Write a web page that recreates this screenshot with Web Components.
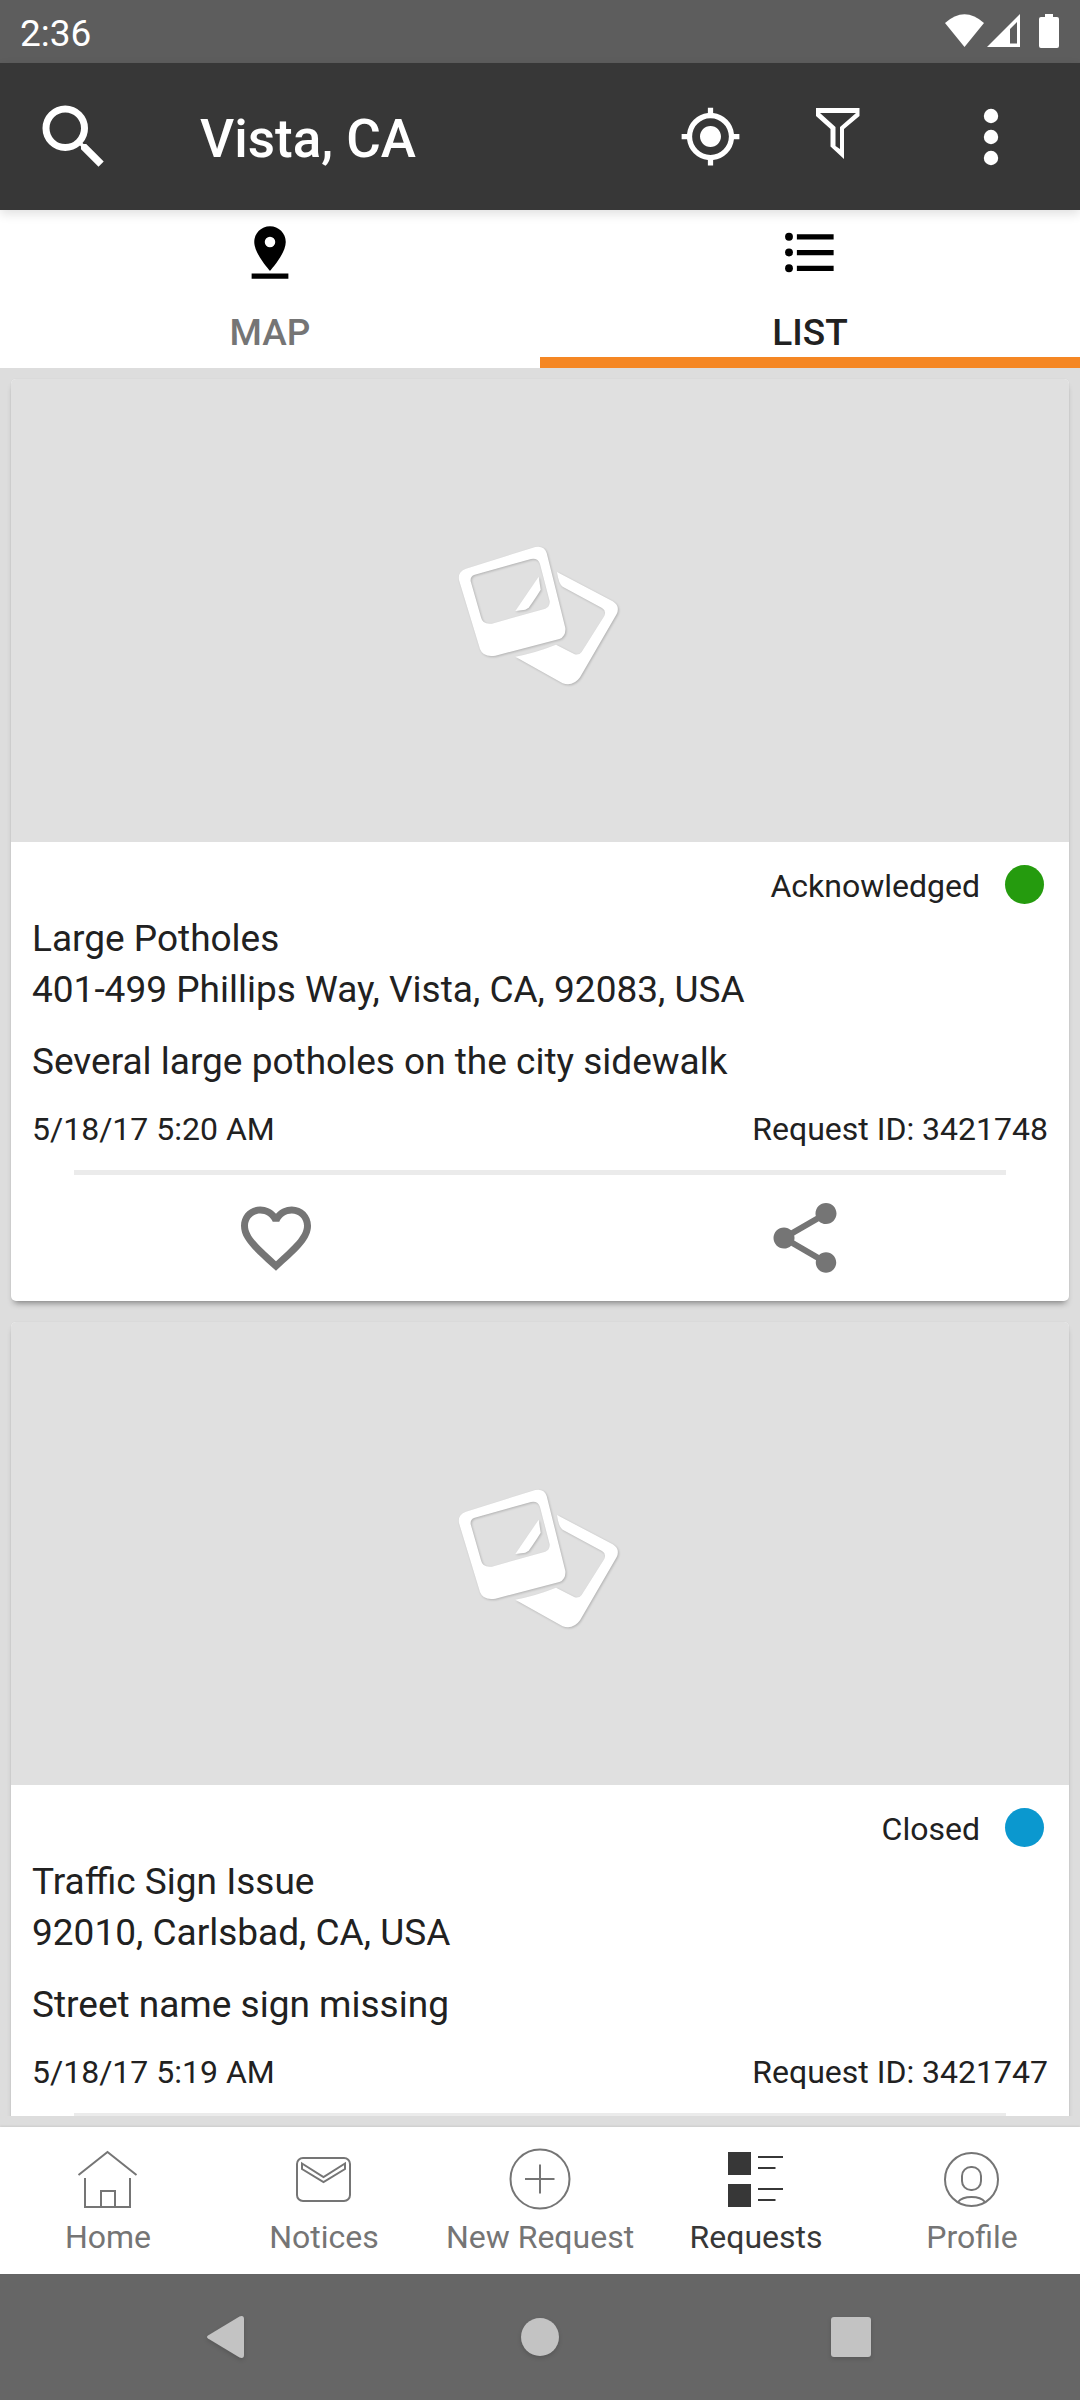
<!DOCTYPE html>
<html lang="en">
<head>
<meta charset="utf-8">
<meta name="viewport" content="width=device-width, initial-scale=1">
<title>Requests</title>
<style>
  body { margin: 0; font-family: Roboto, "Liberation Sans", sans-serif; color: #212121; background: #ddd; }
</style>
</head>
<body>
<requests-app></requests-app>

<script>
const reset = `
  *, *::before, *::after { box-sizing: border-box; }
  :host { display: block; }
  button { margin: 0; padding: 0; border: 0; background: none; font: inherit; color: inherit; cursor: pointer; }
  svg { display: block; flex: none; fill: currentColor; }
`;

function define(name, css, html) {
  const template = document.createElement('template');
  template.innerHTML = `<style>${reset}${css}</style>${html}`;
  customElements.define(name, class extends HTMLElement {
    constructor() {
      super();
      this.attachShadow({ mode: 'open' }).append(template.content.cloneNode(true));
    }
  });
}

define('status-bar', `
  :host { display: flex; align-items: center; justify-content: space-between; height: 63px; padding: 4px 20px 0;
          background: #5d5d5d; color: #fff; font-size: 37px; line-height: 43px; box-sizing: border-box; }
  svg { margin-top: -4px; }
`, `
  <span>2:36</span>
  <svg width="116" height="36" viewBox="944 14 116 36" aria-hidden="true">
    <path d="M945 23Q964.500 5.500 984 23L964.500 47Z"/>
    <path fill-rule="evenodd" d="M987 47L1020 14V47ZM1010 29V43.500H1017V22Z"/>
    <path d="M1045 14H1053V17H1057Q1059 17 1059 19V46Q1059 48 1057 48H1041Q1039 48 1039 46V19Q1039 17 1041 17H1045Z"/>
  </svg>
`);

define('app-bar', `
  :host { display: flex; align-items: center; height: 147px; padding: 0 26px 0 10px; background: #373737; color: #fff;
          box-shadow: 0 4px 10px rgba(0,0,0,.12); z-index: 1; }
  button { display: flex; justify-content: center; align-items: center; width: 127px; height: 100%; }
  h1 { flex: 1; margin: 0 0 0 63px; padding-top: 5px; font-size: 53px; line-height: 62px; font-weight: 500; white-space: nowrap; }
  .more { margin-left: 26px; }
`, `
  <button aria-label="Search"><svg width="84" height="84" viewBox="0 0 24 24"><path d="M15.500 14h-.79l-.28-.27A6.470 6.470 0 0 0 16 9.500 6.500 6.500 0 1 0 9.500 16c1.610 0 3.090-.59 4.230-1.570l.27.28v.79l5 4.990L20.490 19l-4.990-5zm-6 0a4.500 4.500 0 1 1 0-9 4.500 4.500 0 0 1 0 9z"/></svg></button>
  <h1><slot></slot></h1>
  <button aria-label="My location"><svg width="63" height="63" viewBox="0 0 24 24"><path d="M12 8c-2.210 0-4 1.790-4 4s1.790 4 4 4 4-1.790 4-4-1.790-4-4-4zm8.940 3A8.994 8.994 0 0 0 13 3.060V1h-2v2.060A8.994 8.994 0 0 0 3.060 11H1v2h2.060A8.994 8.994 0 0 0 11 20.940V23h2v-2.060A8.994 8.994 0 0 0 20.940 13H23v-2h-2.060zM12 19c-3.870 0-7-3.130-7-7s3.130-7 7-7 7 3.130 7 7-3.130 7-7 7z"/></svg></button>
  <button aria-label="Filter"><svg width="63" height="63" viewBox="0 0 63 63"><path fill-rule="evenodd" d="M10 3H53.500V11L38 24V54L24.500 41.500V24L10 11ZM14 8L29.500 22V41L34 44V22L50 8Z"/></svg></button>
  <button class="more" aria-label="More options"><svg width="84" height="84" viewBox="0 0 24 24"><circle cx="12" cy="6" r="2.050"/><circle cx="12" cy="12" r="2.050"/><circle cx="12" cy="18" r="2.050"/></svg></button>
`);

define('view-tabs', `
  :host { display: grid; grid-template-columns: 1fr 1fr; background: #fff; }
  button { display: flex; flex-direction: column; align-items: center; gap: 27px; height: 158px; padding-top: 11px;
           font-size: 37px; line-height: 44px; font-weight: 500; color: #757575; }
  svg { fill: #000; }
  [aria-selected=true] { color: #212121; box-shadow: inset 0 -11px #f58723; }
`, `
  <button role="tab" aria-selected="false"><svg width="64" height="63" viewBox="0 0 24 24"><path d="M18 8c0-3.310-2.690-6-6-6S6 4.690 6 8c0 4.500 6 11 6 11s6-6.500 6-11zm-8 0a2 2 0 1 1 4 0 2 2 0 0 1-4 0zM5 20v2h14v-2H5z"/></svg>MAP</button>
  <button role="tab" aria-selected="true"><svg width="64" height="63" viewBox="0 0 24 24"><circle cx="4" cy="6" r="1.500"/><circle cx="4" cy="12" r="1.500"/><circle cx="4" cy="18" r="1.500"/><path d="M7 5h14v2H7zM7 11h14v2H7zM7 17h14v2H7z"/></svg>LIST</button>
`);

define('photo-placeholder', `
  :host { display: flex; align-items: center; justify-content: center; height: 463px; background: #e0e0e0; color: #fff; }
  svg { filter: drop-shadow(1px 1px 1px rgba(0,0,0,.2)); }
`, `
  <svg width="240" height="190" viewBox="2 -14 720 570" role="img" aria-label="No photo">
    <path d="M413 154L580 242Q603 256 592 280L482 470Q462 498 430 488L288 408Q350 396 410 372L466 401Q480 404 487 394L555 286Q562 270 548 262L430 198Q418 190 413 154Z"/>
    <path fill-rule="evenodd" d="M119 178Q115 152 140 144L348 79Q374 74 382 97L438 322Q440 347 420 355L228 405Q192 411 182 385ZM154 182Q152 166 166 162L335 115Q356 111 362 130L391 242Q392 259 378 264L218 309Q190 313 185 290Z"/>
    <path d="M288 271L358 168L364 207Q350 230 328 261L318 267Z"/>
  </svg>
`);

define('request-card', `
  :host { flex: none; overflow: hidden; border-radius: 5px; background: #fff; box-shadow: 0 5px 6px -3px rgba(0,0,0,.42), 0 0 2px rgba(0,0,0,.05); }
  .info { padding: 23px 21px 19px; font-size: 37px; line-height: 51px; }
  .status { display: flex; justify-content: flex-end; gap: 25px; margin: 0 4px 5px 0; font-size: 32px; line-height: 43px; }
  .dot { width: 39px; height: 39px; border-radius: 50%; background: var(--status-color); }
  .description { margin-top: 21px; }
  .meta { display: flex; justify-content: space-between; margin-top: 20px; font-size: 32px; line-height: 44px; }
  hr { height: 5px; margin: 0 63px; border: 0; background: #ebebeb; }
  .actions { display: grid; grid-template-columns: 1fr 1fr; height: 126px; color: #757575; }
  button { display: flex; align-items: center; justify-content: center; }
`, `
  <photo-placeholder></photo-placeholder>
  <div class="info">
    <div class="status"><slot name="status"></slot><span class="dot"></span></div>
    <div><slot name="title"></slot></div>
    <div><slot name="address"></slot></div>
    <div class="description"><slot name="description"></slot></div>
    <div class="meta"><slot name="date"></slot><slot name="id"></slot></div>
  </div>
  <hr>
  <div class="actions">
    <button aria-label="Follow"><svg width="84" height="84" viewBox="0 0 24 24"><path d="M16.500 3c-1.740 0-3.410.81-4.500 2.090C10.910 3.810 9.240 3 7.500 3 4.420 3 2 5.420 2 8.500c0 3.780 3.400 6.860 8.550 11.540L12 21.350l1.450-1.320C18.600 15.360 22 12.280 22 8.500 22 5.420 19.580 3 16.500 3zm-4.400 15.550l-.1.1-.1-.1C7.140 14.240 4 11.390 4 8.500 4 6.500 5.500 5 7.500 5c1.540 0 3.040.99 3.570 2.360h1.870C13.460 5.990 14.960 5 16.500 5c2 0 3.500 1.500 3.500 3.500 0 2.890-3.140 5.740-7.900 10.050z"/></svg></button>
    <button aria-label="Share"><svg width="84" height="84" viewBox="0 0 24 24"><path d="M18 16.080c-.76 0-1.440.3-1.960.77L8.910 12.700c.05-.23.09-.46.09-.7s-.04-.47-.09-.7l7.050-4.110c.54.5 1.250.81 2.040.81 1.660 0 3-1.340 3-3s-1.340-3-3-3-3 1.340-3 3c0 .24.04.47.09.7L8.040 9.810C7.500 9.310 6.790 9 6 9c-1.660 0-3 1.340-3 3s1.340 3 3 3c.79 0 1.500-.31 2.040-.81l7.120 4.160c-.05.21-.08.43-.08.65 0 1.610 1.310 2.920 2.920 2.920s2.920-1.310 2.920-2.920-1.310-2.920-2.920-2.920z"/></svg></button>
  </div>
`);

define('request-list', `
  :host { display: flex; flex: 1; min-height: 0; padding-bottom: 11px; background: #ddd; }
  .scroller { display: flex; flex: 1; flex-direction: column; gap: 21px; padding: 11px 11px 0; overflow-y: auto; scrollbar-width: none; }
`, `<div class="scroller"><slot></slot></div>`);

define('nav-item', `
  :host { display: flex; color: #757575; }
  :host([current]) { color: #373737; }
  a { display: flex; flex: 1; flex-direction: column; align-items: center; gap: 4px; padding-top: 20px;
      font-size: 32px; line-height: 44px; white-space: nowrap; color: inherit; text-decoration: none; }
`, `<a href="#"><slot name="icon"></slot><slot></slot></a>`);

define('bottom-nav', `
  :host { height: 147px; background: #fff; box-shadow: 0 -1px 2px rgba(0,0,0,.08); z-index: 1; }
  nav { display: grid; grid-template-columns: repeat(5, 1fr); }
  svg { width: 64px; height: 64px; fill: none; stroke: currentColor; stroke-width: 2px; }
`, `
  <nav>
    <nav-item><svg slot="icon" viewBox="0 0 64 64"><path d="M2.500 28L31.500 5L60.500 28M9 31V60H54V31M25 60V44H39V60"/></svg>Home</nav-item>
    <nav-item><svg slot="icon" viewBox="0 0 64 64"><rect x="5" y="11" width="53" height="43" rx="6"/><path d="M10 16.500L31.500 30L53 16.500V22L31.500 35L10 22Z"/></svg>Notices</nav-item>
    <nav-item><svg slot="icon" viewBox="0 0 64 64"><circle cx="32" cy="32" r="29.500"/><path d="M17 32H46.500M32 17.500V46.500"/></svg>New Request</nav-item>
    <nav-item current><svg slot="icon" viewBox="0 0 64 64"><path fill="currentColor" stroke="none" d="M4 5H27V28H4ZM4 37H27V60H4Z"/><path d="M34 10H59M34 21H51.500M34 42H59M34 53H51.500"/></svg>Requests</nav-item>
    <nav-item><svg slot="icon" viewBox="0 0 64 64"><circle cx="31.500" cy="32.500" r="26.500"/><rect x="22" y="20" width="19" height="23" rx="9"/><path d="M18 55Q22 50 31.500 50T45 55"/></svg>Profile</nav-item>
  </nav>
`);

define('system-nav', `
  :host { display: grid; grid-template-columns: repeat(3, 1fr); height: 126px; padding: 0 70px; background: #666; color: #c3c3c3; }
  button { display: flex; align-items: center; justify-content: center; }
  svg { filter: drop-shadow(0 2px 2px rgba(0,0,0,.15)); }
`, `
  <button aria-label="Back"><svg width="48" height="48" viewBox="0 0 48 48"><path d="M5 22.500L36.500 3.500Q41 2 41 6V42Q41 46 36.500 44.500L5 25.500Q3 24 5 22.500Z"/></svg></button>
  <button aria-label="Home"><svg width="48" height="48" viewBox="0 0 48 48"><circle cx="24" cy="24" r="19"/></svg></button>
  <button aria-label="Recent apps"><svg width="48" height="48" viewBox="0 0 48 48"><rect x="2" y="4" width="40" height="40" rx="3"/></svg></button>
`);

define('requests-app', `
  :host { display: flex; flex-direction: column; height: 100vh; }
  status-bar, app-bar, view-tabs, bottom-nav, system-nav { flex: none; }
  .acknowledged { --status-color: #259b0e; }
  .closed { --status-color: #0b98cf; }
`, `
  <status-bar></status-bar>
  <app-bar>Vista, CA</app-bar>
  <view-tabs role="tablist"></view-tabs>
  <request-list>
    <request-card class="acknowledged">
      <span slot="status">Acknowledged</span>
      <span slot="title">Large Potholes</span>
      <span slot="address">401-499 Phillips Way, Vista, CA, 92083, USA</span>
      <span slot="description">Several large potholes on the city sidewalk</span>
      <span slot="date">5/18/17 5:20 AM</span>
      <span slot="id">Request ID: 3421748</span>
    </request-card>
    <request-card class="closed">
      <span slot="status">Closed</span>
      <span slot="title">Traffic Sign Issue</span>
      <span slot="address">92010, Carlsbad, CA, USA</span>
      <span slot="description">Street name sign missing</span>
      <span slot="date">5/18/17 5:19 AM</span>
      <span slot="id">Request ID: 3421747</span>
    </request-card>
  </request-list>
  <bottom-nav></bottom-nav>
  <system-nav></system-nav>
`);
</script>
</body>
</html>
